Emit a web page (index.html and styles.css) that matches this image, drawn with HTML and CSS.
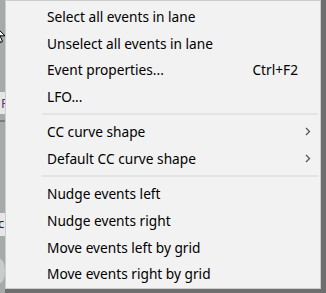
FILE: index.html
```html
<!DOCTYPE html>
<html>
<head>
<meta charset="utf-8">
<link rel="stylesheet" href="styles.css">
</head>
<body>
<div class="screen">
  <div class="strip">
    <div class="strip-gap1"></div>
    <div class="strip-box"><span class="strip-f">F</span></div>
    <div class="strip-line"></div>
    <div class="strip-gap2"></div>
    <div class="strip-box strip-box2"><span class="strip-c">c</span></div>
    <div class="strip-gap3"></div>
    <div class="strip-knob"></div>
  </div>
  <div class="menu">
    <div class="item"><span class="label">Select all events in lane</span></div>
    <div class="item"><span class="label">Unselect all events in lane</span></div>
    <div class="item"><span class="label">Event properties...</span><span class="shortcut">Ctrl+F2</span></div>
    <div class="item"><span class="label">LFO...</span></div>
    <div class="sep"></div>
    <div class="item"><span class="label">CC curve shape</span><svg class="arrow" width="6" height="9" viewBox="0 0 6 9"><polyline points="1,1 4.5,4.5 1,8" fill="none" stroke="#555" stroke-width="1.3"/></svg></div>
    <div class="item"><span class="label">Default CC curve shape</span><svg class="arrow" width="6" height="9" viewBox="0 0 6 9"><polyline points="1,1 4.5,4.5 1,8" fill="none" stroke="#555" stroke-width="1.3"/></svg></div>
    <div class="sep"></div>
    <div class="item"><span class="label">Nudge events left</span></div>
    <div class="item"><span class="label">Nudge events right</span></div>
    <div class="item"><span class="label">Move events left by grid</span></div>
    <div class="item"><span class="label">Move events right by grid</span></div>
  </div>
  <div class="shadow"></div>
</div>
<svg class="cursor" width="12" height="19" viewBox="0 0 12 19"><path d="M0.5,0.5 L0.5,15 L4,11.5 L6.5,17.5 L8.5,16.5 L6,10.8 L11,10.8 Z" fill="#fff" stroke="#000" stroke-width="1"/></svg>
</body>
</html>
```
FILE: styles.css
```css
html, body {
  margin: 0;
  padding: 0;
  width: 326px;
  height: 293px;
  overflow: hidden;
  background: #6f6f6f;
}
.screen {
  display: flex;
  width: 326px;
  height: 293px;
  position: relative;
}
.strip {
  width: 5px;
  flex: none;
  background: #a7aaab;
  display: flex;
  flex-direction: column;
}
.strip-gap1 { height: 92px; flex: none; }
.strip-box {
  height: 22px;
  flex: none;
  background: #e6e6e6;
  position: relative;
  overflow: hidden;
}
.strip-f, .strip-c {
  position: absolute;
  left: 1px;
  top: 3px;
  font-family: "Noto Sans", sans-serif;
  font-size: 13px;
  line-height: 16px;
  color: #5a3a70;
}
.strip-c { left: -2px; top: 2px; color: #202020; }
.strip-line { height: 2px; flex: none; background: #7a7c7d; margin-top: 6px; }
.strip-gap2 { height: 91px; flex: none; }
.strip-box2 { height: 23px; }
.strip-gap3 { height: 23px; flex: none; }
.strip-knob {
  height: 24px;
  width: 10px;
  margin-left: -5px;
  border-radius: 50%;
  background: #c9cbcc;
  flex: none;
}
.menu {
  width: 316px;
  height: 289px;
  flex: none;
  box-sizing: border-box;
  background: #f2f2f2;
  border: 1px solid #cdcdcd;
  padding-top: 2px;
  display: flex;
  flex-direction: column;
  font-family: "Noto Sans", sans-serif;
  font-size: 13.7px;
  color: #000;
}
.item {
  height: 26.7px;
  flex: none;
  display: flex;
  align-items: center;
  padding-left: 41px;
  padding-right: 12px;
}
.label { flex: 1; line-height: 16px; padding-top: 1px; white-space: nowrap; }
.shortcut { line-height: 16px; padding-right: 10px; padding-top: 1px; white-space: nowrap; }
.arrow { margin-right: -3px; }
.sep {
  height: 8.6px;
  flex: none;
  box-sizing: border-box;
  margin-left: 36px;
  margin-right: 2px;
  border-bottom: 1px solid #d5d5d5;
  transform: translateY(-3.5px);
}
.shadow {
  width: 5px;
  flex: none;
  background: #6e6e6e;
}
.cursor {
  position: absolute;
  left: -6px;
  top: 25px;
}
```
